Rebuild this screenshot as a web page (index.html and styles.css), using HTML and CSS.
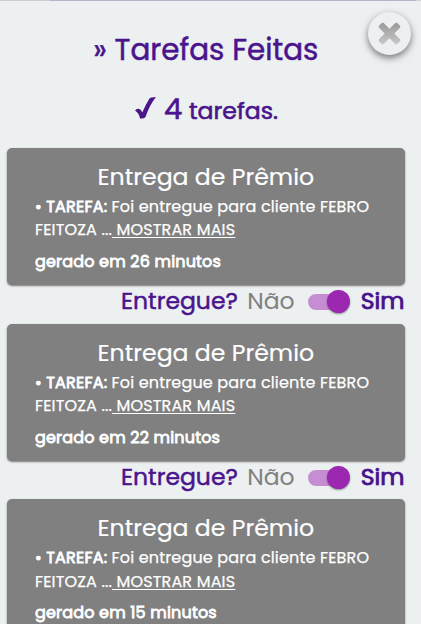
FILE: index.html
```html
<!DOCTYPE html>
<html lang="pt-BR">
<head>
<meta charset="utf-8">
<title>Tarefas Feitas</title>
<link rel="stylesheet" href="styles.css">
</head>
<body>
<div class="progress"></div>
<button class="close" aria-label="Fechar">
  <svg viewBox="0 0 24 24" width="23" height="23">
    <defs><linearGradient id="g" x1="0" y1="0" x2="0" y2="1"><stop offset="0" stop-color="#999"/><stop offset="1" stop-color="#c8c8c8"/></linearGradient></defs>
    <path fill="url(#g)" d="M6 1 12 7 18 1Q19 .4 20 1L23 4Q23.6 5 23 6L17 12 23 18Q23.6 19 23 20L20 23Q19 23.6 18 23L12 17 6 23Q5 23.6 4 23L1 20Q.4 19 1 18L7 12 1 6Q.4 5 1 4L4 1Q5 .4 6 1Z"/>
  </svg>
</button>
<main>
  <h1><span>» Tarefas Feitas</span></h1>
  <h2>
    <svg class="check" viewBox="0 0 21 22" width="21" height="22"><path d="M0 13.5Q2 11 4.5 12Q6.500 13 7.300 15.500Q11 7 14.500 1.500Q16 0 21 0Q14.500 8 10.500 20Q9 22 5 21.500Q4 16 0 13.500Z"/></svg>
    <span class="count">4</span><span class="label">tarefas.</span>
  </h2>
  <section class="task">
    <article class="card">
      <h3><span>Entrega de Prêmio</span></h3>
      <p class="line"><b>• TAREFA:</b><span class="text">Foi entregue para cliente FEBRO</span></p>
      <p class="line"><span class="rest">FEITOZA ...</span><a>&nbsp;MOSTRAR MAIS</a></p>
      <p class="time">gerado em 26 minutos</p>
    </article>
    <div class="delivery"><span class="ask">Entregue?</span><span class="no">Não</span><span class="switch"><i></i></span><span class="yes">Sim</span></div>
  </section>
  <section class="task">
    <article class="card">
      <h3><span>Entrega de Prêmio</span></h3>
      <p class="line"><b>• TAREFA:</b><span class="text">Foi entregue para cliente FEBRO</span></p>
      <p class="line"><span class="rest">FEITOZA ...</span><a>&nbsp;MOSTRAR MAIS</a></p>
      <p class="time">gerado em 22 minutos</p>
    </article>
    <div class="delivery"><span class="ask">Entregue?</span><span class="no">Não</span><span class="switch"><i></i></span><span class="yes">Sim</span></div>
  </section>
  <section class="task">
    <article class="card last">
      <h3><span>Entrega de Prêmio</span></h3>
      <p class="line"><b>• TAREFA:</b><span class="text">Foi entregue para cliente FEBRO</span></p>
      <p class="line"><span class="rest">FEITOZA ...</span><a>&nbsp;MOSTRAR MAIS</a></p>
      <p class="time">gerado em 15 minutos</p>
    </article>
  </section>
</main>
</body>
</html>
```
FILE: styles.css
```css
* { box-sizing: border-box; }
body {
  margin: 0;
  height: 624px;
  overflow: hidden;
  position: relative;
  background: #ecf0f1;
  color: #4a148c;
  font-family: Poppins, Inter, "Noto Sans", sans-serif;
}
h1, h2, h3, p { margin: 0; font-weight: 400; white-space: nowrap; }
.progress { height: 1px; background: linear-gradient(90deg, #ccced0 50px, #b9b2cd 50px 416px, #d0d2d4 416px); }
.close {
  position: absolute;
  top: 12px;
  left: 368px;
  width: 43px;
  height: 43px;
  border: 0;
  padding: 0;
  border-radius: 50%;
  display: grid;
  place-items: center;
  background: #ecf0f1;
  box-shadow: 0 3px 7px rgba(0, 0, 0, .5);
}
main { width: 397.5px; height: 623px; margin-left: 7px; }
h1 {
  height: 77px;
  padding-top: 29px;
  text-align: center;
  font-size: 29.4px;
  line-height: 40px;
  -webkit-text-stroke: .5px;
}
h2 {
  height: 70px;
  padding: 11px 0 0 128px;
  display: flex;
  align-items: baseline;
  line-height: 40px;
  -webkit-text-stroke: .6px;
}
.check { fill: #4a148c; }
.count { width: 25px; margin-left: 8px; font-size: 29px; }
.label { font-size: 23.6px; }
.task { height: 175.7px; }
.task:last-child { height: 124.6px; }
.card {
  height: 137px;
  padding: 13px 28px 0;
  border-radius: 5px;
  background: #808080;
  color: #fff;
  box-shadow: 0 1px 2px rgba(0, 0, 0, .5);
}
.last { height: 124.6px; border-radius: 5px 5px 0 0; }
h3 { height: 34px; line-height: 32px; font-size: 23.6px; text-align: center; -webkit-text-stroke: .2px; }
.line { display: flex; height: 23.3px; line-height: 23.3px; font-size: 16px; letter-spacing: .17px; -webkit-text-stroke: .25px; }
b { width: 76.5px; font-weight: 400; letter-spacing: .2px; -webkit-text-stroke: .8px; }
.rest { width: 77px; }
a { text-decoration: underline; text-underline-offset: 2px; }
.time { margin-top: 8.4px; line-height: 24px; font-size: 16px; letter-spacing: .18px; -webkit-text-stroke: .8px; }
.delivery { height: 38px; padding-left: 114px; display: flex; line-height: 32px; font-size: 23.5px; }
.ask { width: 127px; -webkit-text-stroke: .5px; }
.no { width: 62px; color: #808080; }
.switch {
  flex: none;
  width: 40px;
  height: 16px;
  margin: 9px 12.5px 0 -.5px;
  border-radius: 8px;
  background: #c78dd2;
}
.switch i {
  display: block;
  width: 23px;
  height: 23px;
  margin: -4px 0 0 19px;
  border-radius: 50%;
  background: #9c27b0;
  box-shadow: 0 1px 2px rgba(0, 0, 0, .4);
}
.yes { text-shadow: 0 0 1px #4a148c; -webkit-text-stroke: .5px; }
```
